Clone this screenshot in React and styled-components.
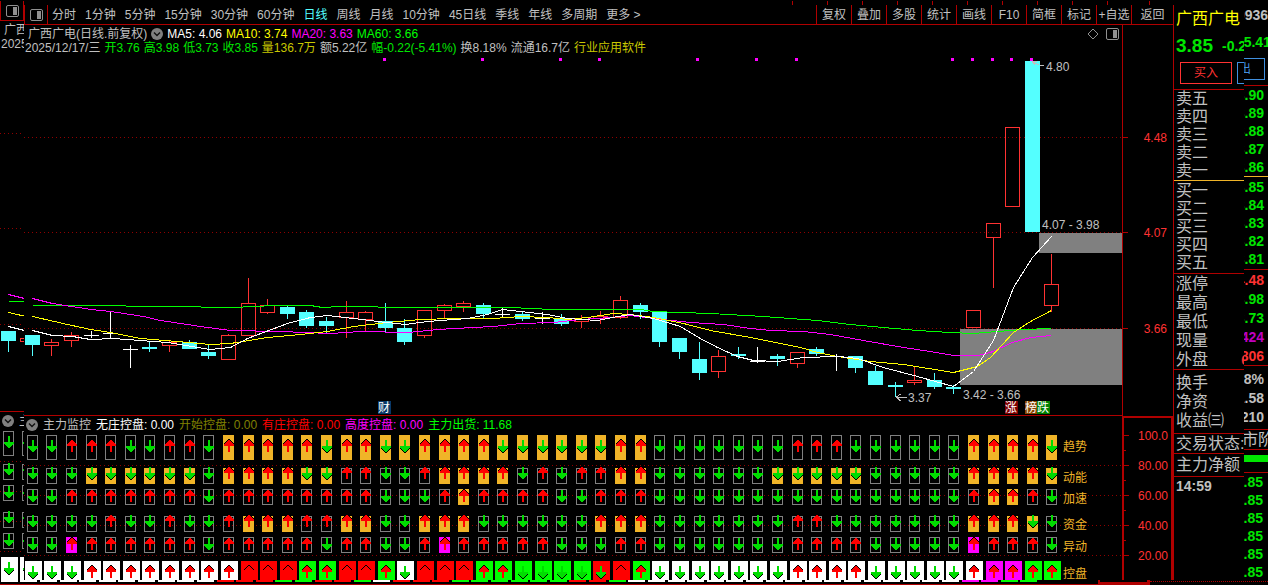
import React from "react";
import styled, { createGlobalStyle } from "styled-components";

const colors = {
  line: "#b00000",
  grid: "#900000",
  text: "#c0c0c0",
  up: "#ff3232",
  down: "#54ffff",
  green: "#00e600",
  lime: "#00ff00",
  magenta: "#ff00ff",
  yellow: "#ffff00",
  amber: "#f0b428",
};

const GlobalStyle = createGlobalStyle`
  * {
    box-sizing: border-box;
  }

  body {
    margin: 0;
    background: #000;
    color: ${colors.text};
    font: 12px/14px "Liberation Sans", "Noto Sans CJK SC", sans-serif;
    overflow: hidden;
  }

  button {
    background: none;
    border: 0;
    padding: 0;
    font: inherit;
    color: inherit;
    cursor: pointer;
    white-space: nowrap;
  }
`;

/* ---------- windows ---------- */

const Desktop = styled.div`
  position: relative;
  overflow: hidden;
  padding-top: 1px;
`;

const FrontWindow = styled.div`
  position: absolute;
  top: 5px;
  left: 24px;
  right: 24px;
  bottom: 5px;
  overflow: hidden;
  background: #000;
`;

const Frame = styled.div`
  display: flex;
  width: 100vw;
`;

const Main = styled.main`
  flex: 1;
  min-width: 0;
  border-bottom: 1px solid ${colors.line};
`;

/* ---------- toolbar ---------- */

const Toolbar = styled.nav`
  display: flex;
  height: 20px;
  border-bottom: 1px solid ${colors.line};
`;

const LayoutButton = styled.button`
  display: flex;
  align-items: center;
  justify-content: center;
  width: 24px;
  flex-shrink: 0;
  border: solid ${colors.line};
  border-width: 0 1px;
`;

const Periods = styled.div`
  display: flex;
  flex: 1;
  gap: 9px;
  padding-left: 4px;
  overflow: hidden;
`;

const Period = styled.button`
  color: ${(p) => (p.$active ? colors.down : colors.text)};
`;

const Tool = styled.button`
  width: ${(p) => (p.$wide ? 42 : 35)}px;
  flex-shrink: 0;
  border-left: 1px solid ${colors.line};
`;

/* ---------- chart panes ---------- */

const Pane = styled.section`
  display: flex;
`;

const Plot = styled.div`
  flex: 1;
  min-width: 0;
  border-bottom: ${(p) => (p.$divider ? `1px solid ${colors.line}` : "0")};
`;

const Axis = styled.div`
  width: 51px;
  flex-shrink: 0;
  border: ${(p) => (p.$selected ? 2 : 1)}px solid ${colors.line};
  border-width: ${(p) => (p.$selected ? "2px" : "0 0 0 1px")};
`;

const Canvas = styled.svg`
  display: block;
  width: 100%;
  height: ${(p) => p.$height}px;
`;

const ChartHeader = styled.header`
  display: flex;
  justify-content: space-between;
  height: 31px;
  padding: 2px 3px 0 1px;
  white-space: nowrap;
`;

const Legend = styled.div`
  display: flex;
  align-items: center;
  gap: ${(p) => p.$gap || 4}px;
  padding-left: ${(p) => p.$indent || 0}px;
  white-space: nowrap;
`;

const IndicatorHeader = styled(Legend)`
  height: 17px;
`;

const Value = styled.span`
  color: ${(p) => p.$color || colors.text};
`;

const HeaderIcons = styled.div`
  display: flex;
  gap: 7px;
  padding-top: 1px;
`;

const IconButton = styled.button`
  display: flex;
  height: 12px;
`;

/* ---------- quote panel ---------- */

const Panel = styled.aside`
  width: 119px;
  flex-shrink: 0;
  border-left: 1px solid ${colors.line};
  white-space: nowrap;
  overflow: hidden;
`;

const Title = styled.div`
  display: flex;
  justify-content: space-between;
  align-items: center;
  height: 28px;
  padding-left: 2px;
  font-size: 16px;
  color: ${colors.yellow};
`;

const Code = styled.span`
  margin-left: auto;
  font-size: 14px;
  font-weight: bold;
  color: ${colors.text};
`;

const Quote = styled.div`
  display: flex;
  align-items: center;
  gap: 9px;
  height: 26px;
  padding-left: 2px;
  font-size: 14px;
  font-weight: bold;
  color: ${colors.green};
`;

const LastPrice = styled.strong`
  flex: 0 0 37px;
  font-size: 19px;
`;

const Change = styled.span`
  flex: 0 0 32px;
`;

const Orders = styled.div`
  display: flex;
  gap: 5px;
  height: 30px;
  padding: 3px 3px 5px 6px;
`;

const OrderButton = styled.button`
  width: 52px;
  border: 1px solid ${(p) => p.$color};
  color: ${(p) => p.$color};
`;

const Block = styled.dl`
  margin: 0;
  padding: ${(p) => p.$pad || 0}px 0;
  border-top: 1px solid ${(p) => p.$line || colors.line};
`;

const Row = styled.div`
  display: flex;
  justify-content: space-between;
  align-items: center;
  height: ${(p) => p.$height || 18}px;
  padding: 0 4px 0 2px;
`;

const Term = styled.dt`
  font-size: 16px;
`;

const Amount = styled.dd`
  margin: 0 0 0 auto;
  font-size: 14px;
  font-weight: bold;
  color: ${(p) => p.$color || colors.green};
`;

const StatusText = styled.dd`
  width: 38px;
  margin: 0 0 0 auto;
  font-size: 16px;
`;

const FlowBar = styled.dd`
  flex-shrink: 0;
  width: 25px;
  height: 7px;
  margin: 0 -4px 6px auto;
  background: ${colors.green};
`;

const Ticks = styled.div`
  border: solid ${colors.line};
  border-width: 1px 0 0;
  border-bottom: 1px dotted ${colors.line};
`;

const Tick = styled(Row)`
  padding-right: 5px;
  font-size: 14px;
  font-weight: bold;
`;

/* ---------- icons ---------- */

const LayoutIcon = () => (
  <svg width="13" height="12" viewBox="0 0 13 12" fill="none">
    <rect x="0.5" y="0.5" width="12" height="11" rx="1.5" stroke="#909090" />
    <path d="M7 2h4v8H7z" fill="#909090" />
  </svg>
);

const ChevronIcon = () => (
  <svg width="12" height="12" viewBox="0 0 12 12">
    <circle cx="6" cy="6" r="6" fill="#808080" />
    <path d="M3 4.5l3 3 3-3" stroke="#111" strokeWidth="1.4" fill="none" />
  </svg>
);

const DiamondIcon = () => (
  <svg width="12" height="12" viewBox="0 0 12 12">
    <path d="M6 1l5 5-5 5-5-5z" stroke="#909090" fill="none" />
  </svg>
);

/* ---------- data ---------- */

const periods = [
  "分时", "1分钟", "5分钟", "15分钟", "30分钟", "60分钟", "日线", "周线",
  "月线", "10分钟", "45日线", "季线", "年线", "多周期",
];

const tools = ["复权", "叠加", "多股", "统计", "画线", "F10", "简框", "标记", "+自选", "返回"];

// kind (u = up, d = down, x = doji), body top, body bottom, high, low
const candles = [
  ["d", 335, 345, 335, 356], ["u", 342, 346, 339, 356], ["u", 335, 341, 332, 347],
  ["x", 335, 335, 331, 338], ["x", 333, 333, 312, 339], ["x", 349, 349, 345, 368],
  ["d", 347, 349, 341, 352], ["u", 342, 346, 341, 352], ["d", 342, 349, 340, 349],
  ["d", 352, 356, 345, 359], ["u", 335, 360, 334, 360], ["u", 303, 336, 278, 336],
  ["u", 305, 313, 299, 314], ["d", 307, 314, 306, 319], ["d", 312, 326, 310, 328],
  ["d", 321, 326, 317, 333], ["u", 312, 318, 301, 338], ["u", 312, 320, 311, 331],
  ["d", 321, 328, 303, 332], ["d", 328, 342, 319, 345], ["u", 310, 336, 310, 338],
  ["u", 305, 311, 304, 318], ["u", 303, 307, 301, 312], ["d", 305, 314, 303, 318],
  ["x", 314, 314, 308, 317], ["d", 314, 319, 312, 321], ["x", 318, 318, 312, 324],
  ["d", 318, 324, 314, 326], ["u", 319, 322, 315, 328], ["u", 316, 319, 311, 324],
  ["u", 300, 318, 296, 319], ["d", 305, 312, 303, 319], ["d", 312, 342, 312, 347],
  ["d", 338, 352, 338, 359], ["d", 359, 373, 342, 380], ["u", 356, 372, 350, 378],
  ["d", 354, 356, 347, 359], ["x", 361, 361, 347, 363], ["d", 356, 359, 354, 366],
  ["u", 352, 364, 352, 368], ["d", 349, 354, 347, 356], ["x", 356, 356, 354, 371],
  ["d", 356, 368, 356, 373], ["d", 371, 385, 366, 385], ["d", 385, 387, 382, 397],
  ["u", 380, 383, 367, 385], ["d", 380, 387, 373, 389], ["d", 387, 389, 385, 394],
  ["u", 310, 328, 310, 328], ["u", 223, 238, 223, 288], ["u", 127, 207, 127, 207],
  ["d", 61, 232, 61, 232], ["u", 284, 306, 254, 312],
];

const averages = [
  {
    color: colors.lime,
    points:
      "32,305 125,305 126,306 200,306 201,307 235,307 250,306 277,305 310,305 322,307 340,306 375,306 380,307 510,307 552,309 640,309 652,311 710,313 763,316 817,320 850,324 883,327 917,330 950,332 973,333 997,331 1022,329 1051,328",
  },
  {
    color: colors.magenta,
    points:
      "32,298 52,303 71,306 91,309 110,311 130,314 143,316 160,320 200,326 230,330 280,331 330,333 360,331 408,332 437,329 473,327 493,326 520,323 553,322 580,319 610,317 630,315 653,318 690,322 723,324 750,328 770,330 803,331 830,334 863,340 903,347 930,351 953,355 977,355 990,352 1012,342 1030,337 1051,335",
  },
  {
    color: colors.yellow,
    points:
      "32,316 67,324 90,329 110,332 140,338 177,341 210,344 230,343 267,337 300,334 327,331 353,326 387,322 420,319 453,318 493,318 520,316 547,317 567,319 587,317 613,313 630,314 653,317 683,323 710,330 750,337 800,347 817,352 837,356 870,361 903,364 953,372 977,366 990,357 1013,332 1030,321 1051,310",
  },
  {
    color: "#fff",
    points:
      "32,330 52,335 72,336 90,339 113,338 140,340 167,342 210,349 230,347 247,338 287,323 310,317 327,315 353,318 377,321 405,324 427,321 467,318 487,314 502,309 520,311 547,314 567,318 597,320 617,316 630,314 653,318 680,326 698,337 717,347 737,356 753,360 777,361 803,357 837,356 857,358 883,367 917,376 953,386 973,371 993,340 1013,287 1032,257 1051,236",
  },
];

const signalDots = [384, 482, 560, 599, 697, 756, 796, 952, 972, 992, 1011, 1031];

const eventTags = [
  { x: 378, text: "财", fill: "#083868" },
  { x: 1005, text: "涨", fill: "#800000" },
  { x: 1025, text: "榜", fill: "#884400" },
  { x: 1037, text: "跌", fill: "#008000" },
];

const series = (...parts) => parts.join("").split("");

// d / u plain box, D / U amber box, M magenta box with an up arrow
const signalRows = [
  { label: "趋势", y: 435, height: 25, arrow: 446, labelY: 451,
    cells: series("dduuudduudUUUUU", "DUUDDUUUUDDDDDDUU", "dddd", "ddduuudddddd", "UUUUD") },
  { label: "动能", y: 468, height: 16, arrow: 473, labelY: 482,
    cells: series("dddDDDDDDdUUUUD", "DuudduUUUUduduuUU", "dddd", "ddDDDDDddddd", "UUUUD") },
  { label: "加速", y: 489, height: 16, arrow: 496, labelY: 503,
    cells: series("dduuuuuuuduuuuu", "uuuddduUuuuudduuu", "dddd", "dddddddddddd", "uUUud") },
  { label: "资金", y: 516, height: 16, arrow: 521, labelY: 529,
    cells: series("dddduddudduUUUu", "uUUddUUUddddddUUU", "dddd", "ddduuddddddd", "UUUDd") },
  { label: "异动", y: 537, height: 16, arrow: 544, labelY: 551,
    cells: series("ddMuuuuuuduuuuu", "duudduMuuuuuddduu", "dddd", "ddduuuuddddd", "Muuud") },
];

const controlFill = series("WWWWWWWWWWW", "RRRGGRRGW", "RRRGGGGGGRRG", "WWWWWWWWWWWWWWWWW", "MMGG");
const controlDir = series(
  "ddd", "uuuuuuuuuuuuuuuu", "d", "uuuuu", "ddddd", "uu", "ddddddd", "uuuu", "ddddd", "uuuuu"
);

const fills = { W: "#fff", R: "#ff0000", G: colors.lime, M: colors.magenta };

const colX = (i) => Math.round(31.81 + i * 19.609);

/* ---------- drawing ---------- */

function Candle({ data, index }) {
  const [kind, top, bottom, high, low] = data;
  const x = colX(index);
  if (kind === "u") {
    return (
      <g stroke={colors.up} fill="none">
        <path d={`M${x + 0.5} ${high}V${top}M${x + 0.5} ${bottom}V${low}`} />
        <rect x={x - 6.5} y={top + 0.5} width="14" height={bottom - top - 1} />
      </g>
    );
  }
  const color = kind === "d" ? colors.down : "#fff";
  return (
    <g fill={color}>
      <rect x={x} y={high} width="1" height={low - high} />
      <rect x={x - 7} y={top} width="15" height={Math.max(bottom - top, 1)} />
    </g>
  );
}

function PriceNotes() {
  return (
    <>
      <g stroke={colors.text} fill="none">
        <path d="M1032 61l5 1M1032 61l3 4M1033 62l6 3M1040 65l4 1" />
        <path d="M896 397.5h11M896.5 397l4-3M896.5 397l4 4" />
      </g>
      <g fill={colors.text}>
        <text x="1046" y="71">4.80</text>
        <text x="1042" y="229">4.07 - 3.98</text>
        <text x="908" y="402">3.37</text>
        <text x="963" y="399">3.42 - 3.66</text>
      </g>
      {eventTags.map((t) => (
        <g key={t.text}>
          <rect x={t.x} y="401" width="13" height="13" fill={t.fill} />
          <text x={t.x} y="412" fill="#fff">{t.text}</text>
        </g>
      ))}
    </>
  );
}

function GridLines({ levels }) {
  return levels.map((y) => (
    <line key={y} x1="24" x2="110%" y1={y + 0.5} y2={y + 0.5} stroke={colors.grid} strokeDasharray="1 3" />
  ));
}

function PriceChart({ covered }) {
  return (
    <Canvas $height={359} shapeRendering="crispEdges" role="img" aria-label="日线">
      <g transform="translate(-24 -56)">
        <GridLines levels={[137, 232, 328]} />
        <rect x="1039" y="233" width="100%" height="20" fill="#808080" />
        <rect x="960" y="329" width="100%" height="56" fill="#808080" />
        {candles.map((c, i) => (
          <Candle key={i} data={c} index={i} />
        ))}
        {averages.map((a) => (
          <polyline key={a.color} points={a.points} stroke={a.color} fill="none" transform="translate(0.5 0.5)" />
        ))}
        {signalDots.map((x) => (
          <rect key={x} x={x - 1} y="58" width="3" height="3" fill={colors.magenta} />
        ))}
        {!covered && <PriceNotes />}
      </g>
    </Canvas>
  );
}

function Arrow({ x, y, up, outlined }) {
  return (
    <g transform={`translate(${x + 1} ${y}) scale(1 ${up ? 1 : -1})`}>
      {outlined && <path d="M-1-7h2v1h1v1h1v1h1v1h1v2h-10v-2h1v-1h1v-1h1v-1h1z" fill="#000" />}
      <path
        d="M-1-6h2v1h1v1h1v1h1v1h1v2h-4v6h-2v-6h-4v-2h1v-1h1v-1h1v-1h1z"
        fill={up ? "#ff0000" : "#00dc00"}
      />
    </g>
  );
}

function SignalCell({ type, x, row }) {
  const up = type === "u" || type === "U" || type === "M";
  const plain = type === "u" || type === "d";
  const fill = type === "M" ? colors.magenta : colors.amber;
  return (
    <g>
      {plain ? (
        <rect x={x - 4.5} y={row.y + 0.5} width="10" height={row.height - 1} fill="none" stroke="#808080" />
      ) : (
        <rect x={x - 5} y={row.y} width="11" height={row.height} fill={fill} />
      )}
      <Arrow x={x} y={row.arrow} up={up} outlined={!plain} />
    </g>
  );
}

function SignalChart({ covered }) {
  return (
    <Canvas $height={155} shapeRendering="crispEdges" role="img" aria-label="主力监控">
      <g transform="translate(-24 -433)">
        <GridLines levels={[465, 495, 525, 555]} />
        {signalRows.map((row) => (
          <g key={row.label}>
            {row.cells.map((type, i) => (
              <SignalCell key={i} type={type} x={colX(i)} row={row} />
            ))}
            {!covered && <text x="1063" y={row.labelY} fill={colors.amber}>{row.label}</text>}
          </g>
        ))}
        {controlFill.map((f, i) => (
          <g key={i}>
            <rect x={colX(i) - 7} y="561" width="17" height="25" fill={fills[f]} />
            <Arrow x={colX(i)} y={572} up={controlDir[i] === "u"} outlined />
          </g>
        ))}
        {!covered && <text x="1063" y="578" fill={colors.amber}>控盘</text>}
      </g>
    </Canvas>
  );
}

function AxisScale({ height, ticks, minor = [], covered }) {
  return (
    <Canvas $height={height} shapeRendering="crispEdges">
      {ticks.map(([y, label]) => (
        <g key={y}>
          <rect y={y} width="5" height="1" fill={colors.line} />
          {!covered && <text x="44" y={y + 5} textAnchor="end" fill={colors.up}>{label}</text>}
        </g>
      ))}
      {minor.map((y) => (
        <rect key={y} y={y} width="2" height="1" fill={colors.line} />
      ))}
    </Canvas>
  );
}

/* ---------- sections ---------- */

const asks = [["卖五", "3.90"], ["卖四", "3.89"], ["卖三", "3.88"], ["卖二", "3.87"], ["卖一", "3.86"]];
const bids = [["买一", "3.85"], ["买二", "3.84"], ["买三", "3.83"], ["买四", "3.82"], ["买五", "3.81"]];
const details = [
  ["涨停", "4.48", colors.up],
  ["最高", "3.98"],
  ["最低", "3.73"],
  ["现量", "5424", "#c000c0"],
  ["外盘", "683806", colors.up],
];
const ratios = [
  ["换手", "8.18%", colors.text],
  ["净资", "1.58", colors.text],
  ["收益㈢", "0.210", colors.text],
];

function Rows({ items, height, covered }) {
  return items.map(([label, value, color]) => (
    <Row key={label} $height={height}>
      {!covered && <Term>{label}</Term>}
      <Amount $color={color}>{value}</Amount>
    </Row>
  ));
}

function QuotePanel({ covered }) {
  return (
    <Panel>
      <Title>
        {!covered && <span>广西广电</span>}
        <Code>600936</Code>
      </Title>
      <Quote>
        <LastPrice>{!covered && "3.85"}</LastPrice>
        <Change>{!covered && "-0.22"}</Change>
        <Change>-5.41%</Change>
      </Quote>
      <Orders>
        <OrderButton $color={colors.up}>{!covered && "买入"}</OrderButton>
        <OrderButton $color="#4090e0">卖出</OrderButton>
      </Orders>
      <Block>
        <Rows items={asks} covered={covered} />
      </Block>
      <Block $line={colors.amber} $pad={1}>
        <Rows items={bids} covered={covered} />
      </Block>
      <Block>
        <Rows items={details} height={19} covered={covered} />
      </Block>
      <Block $pad={3}>
        <Rows items={ratios} height={19} covered={covered} />
      </Block>
      <Block>
        <Row $height={19}>
          {!covered && <Term>交易状态:</Term>}
          <StatusText>闭市阶段</StatusText>
        </Row>
      </Block>
      <Block>
        <Row $height={22}>
          {!covered && <Term>主力净额</Term>}
          <FlowBar />
        </Row>
      </Block>
      <Ticks>
        {["14:59", "", "", "", "", ""].map((time, i) => (
          <Tick key={i}>
            <span>{!covered && time}</span>
            <Value $color={colors.green}>3.85</Value>
          </Tick>
        ))}
      </Ticks>
    </Panel>
  );
}

function QuoteLegend() {
  return (
    <div>
      <Legend $indent={3}>
        <span>广西广电(日线.前复权)</span>
        <IconButton aria-label="展开">
          <ChevronIcon />
        </IconButton>
        <Value $color="#fff">MA5: 4.06</Value>
        <Value $color={colors.yellow}>MA10: 3.74</Value>
        <Value $color={colors.magenta}>MA20: 3.63</Value>
        <Value $color={colors.lime}>MA60: 3.66</Value>
      </Legend>
      <Legend>
        <span>2025/12/17/三</span>
        <Value $color={colors.green}>开3.76</Value>
        <Value $color={colors.green}>高3.98</Value>
        <Value $color={colors.green}>低3.73</Value>
        <Value $color={colors.green}>收3.85</Value>
        <Value $color="#c8c800">量136.7万</Value>
        <span>额5.22亿</span>
        <Value $color={colors.green}>幅-0.22(-5.41%)</Value>
        <span>换8.18%</span>
        <span>流通16.7亿</span>
        <Value $color="#c8c800">行业应用软件</Value>
      </Legend>
    </div>
  );
}

// a covered window only shows its outer edges, so its inner texts are left out
function Terminal({ covered }) {
  return (
    <Frame>
      <Main>
        <Toolbar>
          <LayoutButton aria-label="布局">
            <LayoutIcon />
          </LayoutButton>
          <Periods>
            {!covered && (
              <>
                {periods.map((p) => (
                  <Period key={p} $active={p === "日线"}>{p}</Period>
                ))}
                <Period>更多 &gt;</Period>
              </>
            )}
          </Periods>
          {tools.map((t) => (
            <Tool key={t} $wide={t === "返回"}>{!covered && t}</Tool>
          ))}
        </Toolbar>
        <Pane>
          <Plot $divider>
            <ChartHeader>
              {covered ? (
                <div>
                  <Legend $indent={3}>广西</Legend>
                  <Legend>2025</Legend>
                </div>
              ) : (
                <QuoteLegend />
              )}
              <HeaderIcons>
                <IconButton aria-label="标记">
                  <DiamondIcon />
                </IconButton>
                <IconButton aria-label="侧栏">
                  <LayoutIcon />
                </IconButton>
              </HeaderIcons>
            </ChartHeader>
            <PriceChart covered={covered} />
          </Plot>
          <Axis>
            <AxisScale
              height={390}
              ticks={[[112, "4.48"], [207, "4.07"], [303, "3.66"]]}
              covered={covered}
            />
          </Axis>
        </Pane>
        <Pane>
          <Plot>
            <IndicatorHeader $gap={5} $indent={2}>
              <IconButton aria-label="展开">
                <ChevronIcon />
              </IconButton>
              {covered ? (
                <span>主</span>
              ) : (
                <>
                  <span>主力监控</span>
                  <Value $color="#fff">无庄控盘: 0.00</Value>
                  <Value $color="#808000">开始控盘: 0.00</Value>
                  <Value $color="#ff0000">有庄控盘: 0.00</Value>
                  <Value $color={colors.magenta}>高度控盘: 0.00</Value>
                  <Value $color={colors.lime}>主力出货: 11.68</Value>
                </>
              )}
            </IndicatorHeader>
            <SignalChart covered={covered} />
          </Plot>
          <Axis $selected>
            <AxisScale
              height={168}
              ticks={[[17, "100.0"], [47, "80.00"], [77, "60.00"], [107, "40.00"], [137, "20.00"]]}
              minor={[32, 62, 92, 122]}
              covered={covered}
            />
          </Axis>
        </Pane>
      </Main>
      <QuotePanel covered={covered} />
    </Frame>
  );
}

export default function App() {
  return (
    <>
      <GlobalStyle />
      <Desktop>
        <div aria-hidden="true" inert>
          <Terminal covered />
        </div>
        <FrontWindow>
          <Terminal />
        </FrontWindow>
      </Desktop>
    </>
  );
}
